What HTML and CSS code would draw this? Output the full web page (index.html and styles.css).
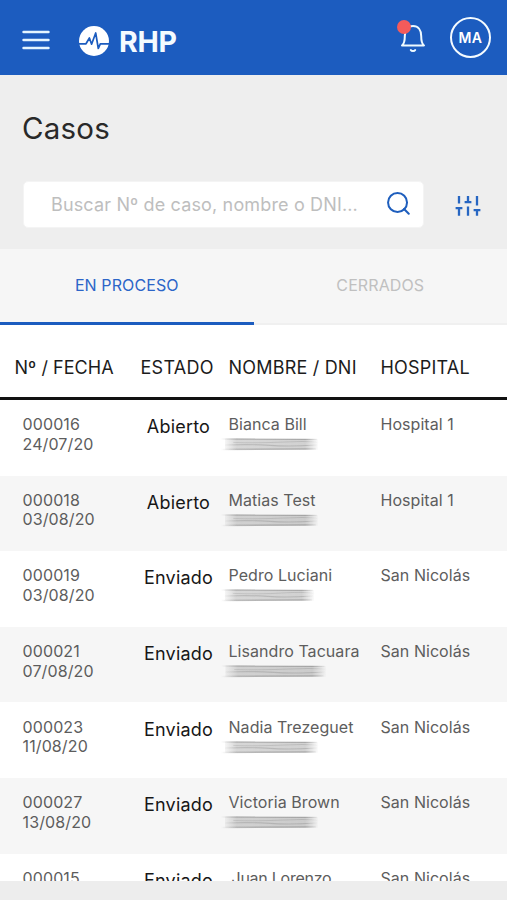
FILE: index.html
```html
<!DOCTYPE html>
<html lang="es">
<head>
<meta charset="utf-8">
<meta name="viewport" content="width=device-width, initial-scale=1">
<title>Casos</title>
<link rel="stylesheet" href="styles.css">
</head>
<body>
<svg width="0" height="0" class="defs" aria-hidden="true">
  <defs>
    <linearGradient id="fade" gradientUnits="userSpaceOnUse" x1="0" y1="0" x2="96" y2="0">
      <stop offset="0" stop-color="#777" stop-opacity="0"/>
      <stop offset=".16" stop-color="#777" stop-opacity=".7"/>
      <stop offset=".86" stop-color="#777" stop-opacity=".8"/>
      <stop offset="1" stop-color="#777" stop-opacity="0"/>
    </linearGradient>
    <symbol id="smudge" viewBox="0 0 96 14" preserveAspectRatio="none">
      <g fill="none" stroke="url(#fade)">
        <path d="M4 7.1L95 7.2" stroke-width="11" opacity=".42"/>
        <path d="M0 2L94 2.4" stroke-width="1.4" opacity=".6"/>
        <path d="M12 5.4Q40 6.4 62 5T96 5.5" stroke-width="1" opacity=".3"/>
        <path d="M4 8Q30 7 48 8.4T94 8" stroke-width="1.2" opacity=".4"/>
        <path d="M0 12.500L93 11.900" stroke-width="1.400" opacity=".55"/>
      </g>
    </symbol>
  </defs>
</svg>
<div class="app">
  <header class="topbar">
    <svg class="menu" viewBox="0 0 28 20"><path d="M1.5 2h25M1.5 10h25M1.5 18h25"/></svg>
    <svg class="logo" viewBox="0 0 30 30"><circle cx="15" cy="15" r="15"/><path d="M0 17.800h7L10.400 12l2.200 6.200L16.700 7l2.600 15.500 2-4.700H30"/></svg>
    <span class="brand">RHP</span>
    <div class="bell">
      <svg viewBox="0 0 26 30"><path d="M2 22.500c2.300-1.800 2.800-4 2.800-9.500 0-6 2.900-10 8.200-10s8.200 4 8.200 10c0 5.500.5 7.700 2.800 9.500zM10.800 27c.8 1.400 3.600 1.400 4.400 0"/></svg>
      <span class="dot"></span>
    </div>
    <span class="avatar">MA</span>
  </header>
  <section class="hero">
    <h1>Casos</h1>
    <div class="tools">
      <div class="search">
        <span class="hint">Buscar Nº de caso, nombre o DNI...</span>
        <svg class="lens" viewBox="0 0 24 24"><circle cx="11" cy="11" r="9.900"/><path d="M17.800 17.800L22.700 22.700"/></svg>
      </div>
      <svg class="filters" viewBox="0 0 28 24"><path d="M5 2v7.500M5 14.200v7.600M1.600 14.200h6.800M14 2v6.200M10.600 8.200h6.800M14 12.500v9.300M23 2v9.500M19.600 16.200h6.800M23 16.200v5.600"/></svg>
    </div>
  </section>
  <nav class="tabs">
    <span class="tab active">EN PROCESO</span>
    <span class="tab">CERRADOS</span>
  </nav>
  <div class="head">
    <span class="h-num">Nº / FECHA</span>
    <span class="h-state">ESTADO</span>
    <span class="h-name">NOMBRE / DNI</span>
    <span class="h-hosp">HOSPITAL</span>
  </div>
  <main class="rows">
    <div class="row"><div class="num">000016<br>24/07/20</div><div class="state">Abierto</div><div class="name">Bianca Bill<svg class="mask"><use href="#smudge"/></svg></div><div class="hosp">Hospital 1</div></div>
    <div class="row"><div class="num">000018<br>03/08/20</div><div class="state">Abierto</div><div class="name">Matias Test<svg class="mask"><use href="#smudge"/></svg></div><div class="hosp">Hospital 1</div></div>
    <div class="row"><div class="num">000019<br>03/08/20</div><div class="state">Enviado</div><div class="name">Pedro Luciani<svg class="mask short"><use href="#smudge"/></svg></div><div class="hosp">San Nicolás</div></div>
    <div class="row"><div class="num">000021<br>07/08/20</div><div class="state">Enviado</div><div class="name">Lisandro Tacuara<svg class="mask long"><use href="#smudge"/></svg></div><div class="hosp">San Nicolás</div></div>
    <div class="row"><div class="num">000023<br>11/08/20</div><div class="state">Enviado</div><div class="name">Nadia Trezeguet<svg class="mask"><use href="#smudge"/></svg></div><div class="hosp">San Nicolás</div></div>
    <div class="row"><div class="num">000027<br>13/08/20</div><div class="state">Enviado</div><div class="name">Victoria Brown<svg class="mask"><use href="#smudge"/></svg></div><div class="hosp">San Nicolás</div></div>
    <div class="row"><div class="num">000015</div><div class="state">Enviado</div><div class="name indent">Juan Lorenzo</div><div class="hosp">San Nicolás</div></div>
  </main>
  <footer class="bottom"></footer>
</div>
</body>
</html>
```
FILE: styles.css
```css
* { box-sizing: border-box; }
body { margin: 0; font-family: Inter, "Liberation Sans", sans-serif; background: #eee; }
.defs { position: absolute; }
svg { display: block; flex: none; }
.app { width: 507px; height: 900px; display: flex; flex-direction: column; overflow: hidden; white-space: nowrap; }
.topbar { height: 75px; flex: none; background: #1c5cbf; display: flex; align-items: center; padding: 0 16px 0 22px; }
.menu { width: 28px; height: 20px; margin-top: 5px; fill: none; stroke: #e4f5ff; stroke-width: 2.4; stroke-linecap: round; }
.logo { width: 30px; height: 30px; margin: 7px 0 0 29px; fill: #fff; }
.logo path { fill: none; stroke: #1c5cbf; stroke-width: 1.7; stroke-linejoin: round; }
.brand { margin: 8px 0 0 10px; color: #f4fbff; font-size: 28.5px; font-weight: 700; line-height: 34px; letter-spacing: -.3px; }
.bell { position: relative; margin: 0 24px 0 auto; }
.bell svg { width: 26px; height: 30px; fill: none; stroke: #eefaff; stroke-width: 2; stroke-linejoin: round; stroke-linecap: round; }
.dot { position: absolute; left: -3px; top: -3px; width: 14px; height: 14px; border-radius: 50%; background: #f45b5b; }
.avatar { width: 41px; height: 41px; border: 2.5px solid #f4fbff; border-radius: 50%; color: #fff; font-size: 14px; font-weight: 600; line-height: 37px; text-align: center; letter-spacing: .5px; }
.hero { height: 174px; flex: none; background: #eee; padding: 35px 25px 0 22px; }
h1 { margin: 0; font-size: 29.5px; font-weight: 400; line-height: 36px; letter-spacing: .2px; color: #292929; }
.tools { display: flex; align-items: center; justify-content: space-between; margin: 35px 0 0 1px; }
.search { width: 401px; height: 47px; background: #fff; border: 1px solid #f4f4f4; border-radius: 5px; display: flex; align-items: center; justify-content: space-between; padding: 0 13px 0 27px; }
.hint { font-size: 18px; letter-spacing: .15px; color: #bebebe; }
.lens { width: 23px; height: 23px; margin-top: -2px; fill: none; stroke: #1e5ebd; stroke-width: 2.1; stroke-linecap: round; }
.filters { width: 28px; height: 24px; margin-top: 3px; fill: none; stroke: #2766c2; stroke-width: 2.3; stroke-linecap: butt; }
.tabs { height: 76px; flex: none; display: flex; background: #f6f6f6; }
.tab { flex: 1; border-bottom: 2px solid #f0f0f0; line-height: 73px; text-align: center; font-size: 16px; letter-spacing: .1px; color: #c0c0c0; }
.active { border-bottom: 3px solid #1c5cbf; color: #2c65c8; }
.head { height: 75px; flex: none; display: grid; grid-template-columns: 126px 88px 152px 1fr; padding: 0 0 0 14.5px; border-bottom: 3px solid #111; background: #fff; font-size: 18px; letter-spacing: .2px; line-height: 86px; color: #1c1c1c; }
.h-num { letter-spacing: .05px; }
.h-state { letter-spacing: .3px; }
.rows { height: 481px; flex: none; overflow: hidden; }
.row { height: 75.6px; display: grid; grid-template-columns: 114px 84px 160px 1fr; padding: 15.3px 0 0 22.5px; background: #fff; font-size: 16px; letter-spacing: .05px; line-height: 19.5px; color: #5d5d5d; }
.row:nth-child(even) { background: #f6f6f6; }
.num { letter-spacing: .12px; }
.state { text-align: center; font-size: 18px; letter-spacing: .2px; line-height: 23.5px; color: #171717; }
.name { padding-left: 8px; }
.indent { padding-left: 11px; letter-spacing: -.25px; }
.mask { width: 98px; height: 14px; margin: 2.5px 0 0 -8px; filter: blur(.6px); }
.short { width: 94px; }
.long { width: 106px; }
.mask use { width: 100%; height: 100%; }
.bottom { flex: 1; background: #ededed; }
```
